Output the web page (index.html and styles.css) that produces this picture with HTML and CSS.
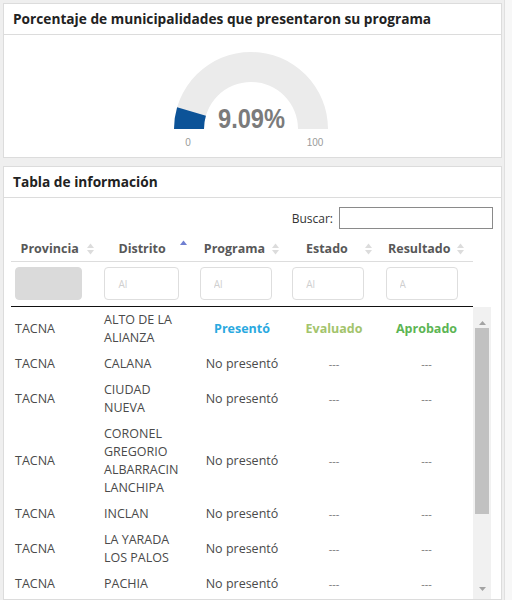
FILE: index.html
```html
<!DOCTYPE html>
<html lang="es">
<head>
<meta charset="utf-8">
<title>Municipalidades</title>
<link rel="stylesheet" href="styles.css">
</head>
<body>
<div class="page">
  <section class="card">
    <h2 class="card-title">Porcentaje de municipalidades que presentaron su programa</h2>
    <div class="gauge-body">
      <svg class="gauge" width="170" height="104" viewBox="0 0 170 104">
        <path class="gauge-bg" d="M 8 84 A 77 77 0 0 1 162 84 L 132 84 A 47 47 0 0 0 38 84 Z"/>
        <path class="gauge-val" d="M 8 84 A 77 77 0 0 1 11.12 62.31 L 39.9 70.76 A 47 47 0 0 0 38 84 Z"/>
        <text class="gauge-num" x="85.5" y="83" text-anchor="middle" textLength="67" lengthAdjust="spacingAndGlyphs">9.09%</text>
        <text class="gauge-lbl" x="22" y="101" text-anchor="middle">0</text>
        <text class="gauge-lbl" x="149" y="101" text-anchor="middle">100</text>
      </svg>
    </div>
  </section>

  <section class="card card-table">
    <h2 class="card-title">Tabla de información</h2>
    <div class="table-body">
      <div class="search">
        <label class="search-label" for="buscar">Buscar:</label>
        <input class="search-input" id="buscar" type="text">
      </div>
      <div class="dt">
        <table class="dt-head">
          <thead>
            <tr class="head-row">
              <th>Provincia<svg class="sort" width="7" height="12" viewBox="0 0 7 12"><polygon points="0,5 3.5,0.5 7,5"/><polygon points="0,7 3.5,11.5 7,7"/></svg></th>
              <th>Distrito<svg class="sort sort-asc" width="7" height="12" viewBox="0 0 7 12"><polygon points="0,5 3.5,0.5 7,5"/></svg></th>
              <th>Programa<svg class="sort" width="7" height="12" viewBox="0 0 7 12"><polygon points="0,5 3.5,0.5 7,5"/><polygon points="0,7 3.5,11.5 7,7"/></svg></th>
              <th>Estado<svg class="sort" width="7" height="12" viewBox="0 0 7 12"><polygon points="0,5 3.5,0.5 7,5"/><polygon points="0,7 3.5,11.5 7,7"/></svg></th>
              <th>Resultado<svg class="sort" width="7" height="12" viewBox="0 0 7 12"><polygon points="0,5 3.5,0.5 7,5"/><polygon points="0,7 3.5,11.5 7,7"/></svg></th>
            </tr>
            <tr class="filter-row">
              <td><input class="filter filter-disabled" type="text" disabled></td>
              <td><input class="filter filter-wide" type="text" placeholder="Al"></td>
              <td><input class="filter" type="text" placeholder="Al"></td>
              <td><input class="filter" type="text" placeholder="Al"></td>
              <td><input class="filter filter-last" type="text" placeholder="A"></td>
            </tr>
          </thead>
        </table>
        <div class="dt-scroll">
          <div class="dt-body">
            <table class="dt-rows">
              <colgroup>
                <col class="c1"><col class="c2"><col class="c3"><col class="c4"><col class="c5">
              </colgroup>
              <tbody>
                <tr><td>TACNA</td><td class="dist">ALTO DE LA ALIANZA</td><td class="ctr ok-blue">Presentó</td><td class="ctr ok-lime">Evaluado</td><td class="ctr ok-green">Aprobado</td></tr>
                <tr><td>TACNA</td><td class="dist">CALANA</td><td class="ctr">No presentó</td><td class="ctr dash">---</td><td class="ctr dash">---</td></tr>
                <tr><td>TACNA</td><td class="dist">CIUDAD NUEVA</td><td class="ctr">No presentó</td><td class="ctr dash">---</td><td class="ctr dash">---</td></tr>
                <tr><td>TACNA</td><td class="dist">CORONEL GREGORIO ALBARRACIN LANCHIPA</td><td class="ctr">No presentó</td><td class="ctr dash">---</td><td class="ctr dash">---</td></tr>
                <tr><td>TACNA</td><td class="dist">INCLAN</td><td class="ctr">No presentó</td><td class="ctr dash">---</td><td class="ctr dash">---</td></tr>
                <tr><td>TACNA</td><td class="dist">LA YARADA LOS PALOS</td><td class="ctr">No presentó</td><td class="ctr dash">---</td><td class="ctr dash">---</td></tr>
                <tr><td>TACNA</td><td class="dist">PACHIA</td><td class="ctr">No presentó</td><td class="ctr dash">---</td><td class="ctr dash">---</td></tr>
              </tbody>
            </table>
          </div>
          <div class="sbar">
            <div class="sbar-btn sbar-btn-up"><svg width="7" height="4" viewBox="0 0 7 4"><polygon points="0,4 3.5,0 7,4"/></svg></div>
            <div class="sbar-track"><div class="sbar-thumb"></div></div>
            <div class="sbar-btn sbar-btn-down"><svg width="7" height="4" viewBox="0 0 7 4"><polygon points="0,0 3.5,4 7,0"/></svg></div>
          </div>
        </div>
      </div>
    </div>
  </section>
</div>
</body>
</html>
```

FILE: styles.css
```css
html, body {
  margin: 0;
  padding: 0;
  background: #f7f7f7;
  height: 600px;
  overflow: hidden;
}

.page {
  width: 499px;
  padding: 3px 2px 0 3px;
  background: #efefef;
  border-right: 1px solid #e0e0e0;
  display: flex;
  flex-direction: column;
  gap: 8px;
  height: 597px;
  font-family: "Open Sans", "Liberation Sans", sans-serif;
}

.card {
  background: #fff;
  border: 1px solid #dcdcdc;
  display: flex;
  flex-direction: column;
}

.card-title {
  margin: 0;
  height: 30px;
  line-height: 30px;
  padding: 0 9px;
  font-size: 13.7px;
  font-weight: 700;
  color: #222;
  border-bottom: 1px solid #dcdcdc;
  white-space: nowrap;
}

.gauge-body {
  height: 122px;
  display: flex;
  justify-content: center;
  align-items: flex-start;
  box-sizing: border-box;
}

.gauge {
  display: block;
  margin-top: 10px;
  margin-left: -3px;
}

.gauge-bg { fill: #ebebeb; }
.gauge-val { fill: #0c5398; }

.gauge-num {
  font-family: "Liberation Sans", Arial, sans-serif;
  font-size: 27px;
  font-weight: 700;
  fill: #7b7b7b;
}

.gauge-lbl {
  font-family: "Liberation Sans", Arial, sans-serif;
  font-size: 10px;
  fill: #9a9a9a;
}

.card-table {
  flex: 1;
  overflow: hidden;
}

.table-body {
  padding: 9px 8px 0 7px;
  display: flex;
  flex-direction: column;
}

.search {
  display: flex;
  justify-content: flex-end;
  align-items: center;
  gap: 6px;
}

.search-label {
  font-size: 12px;
  color: #333;
}

.search-input {
  box-sizing: border-box;
  width: 154px;
  height: 22px;
  margin: 0;
  border: 1px solid #8a8a8a;
  border-radius: 0;
  padding: 0 4px;
  background: #fff;
}

.dt {
  display: flex;
  flex-direction: column;
}

.dt-head {
  width: 462px;
  table-layout: fixed;
  border-collapse: collapse;
}

.head-row th {
  position: relative;
  height: 32px;
  box-sizing: border-box;
  padding: 11px 20px 3px 5px;
  line-height: 18px;
  text-align: center;
  font-size: 12.5px;
  font-weight: 700;
  color: #585858;
  border-bottom: 1px solid #dddddd;
  white-space: nowrap;
}

.sort {
  position: absolute;
  right: 9px;
  top: 14px;
  fill: #dcdcdc;
}

.sort-asc {
  fill: #6f7fd1;
  top: 11px;
}

.filter-row td {
  padding: 5px 0 6px 4px;
  border-bottom: 1px solid #111;
}

.filter {
  box-sizing: border-box;
  display: block;
  width: 72px;
  height: 33px;
  margin: 0;
  padding: 0 0 0 13px;
  border: 1px solid #dedede;
  border-radius: 4px;
  background: #fff;
  font-family: "Open Sans", "Liberation Sans", sans-serif;
  font-size: 10px;
}

.filter::placeholder {
  color: #cfcfcf;
}

.filter-disabled {
  width: 67px;
  background: #dadada;
  border-color: #dadada;
}

.filter-wide {
  width: 75px;
  margin-left: -3px;
}

.filter-last {
  margin-left: 1px;
}

.dt-scroll {
  display: flex;
  height: 292px;
  overflow: hidden;
}

.dt-body {
  width: 462px;
  overflow: hidden;
}

.dt-rows {
  width: 462px;
  table-layout: fixed;
  border-collapse: collapse;
}

.c1 { width: 89px; }
.c2 { width: 96px; }
.c3 { width: 92px; }
.c4 { width: 92px; }
.c5 { width: 93px; }

.dt-rows td {
  padding: 4px;
  font-size: 12.5px;
  line-height: 18px;
  color: #4a4a4a;
  vertical-align: middle;
}

.dt-rows td.dist {
  padding-right: 12px;
}

.dt-rows td.ctr {
  text-align: center;
}

.dt-rows td.dash {
  color: #777;
  font-size: 11px;
}

.dt-rows td.ok-blue { color: #2aa9e0; font-weight: 700; }
.dt-rows td.ok-lime { color: #a3c46c; font-weight: 700; }
.dt-rows td.ok-green { color: #5cb554; font-weight: 700; }

.sbar {
  width: 18px;
  background: #f1f1f1;
  display: flex;
  flex-direction: column;
}

.sbar-btn {
  height: 21px;
  display: flex;
  align-items: center;
  justify-content: center;
  fill: #a3a3a3;
}

.sbar-btn-up {
  align-items: flex-end;
  padding-bottom: 3px;
  box-sizing: border-box;
}

.sbar-track {
  flex: 1;
  padding: 0 2px;
}

.sbar-thumb {
  height: 186px;
  background: #c1c1c1;
}
```
